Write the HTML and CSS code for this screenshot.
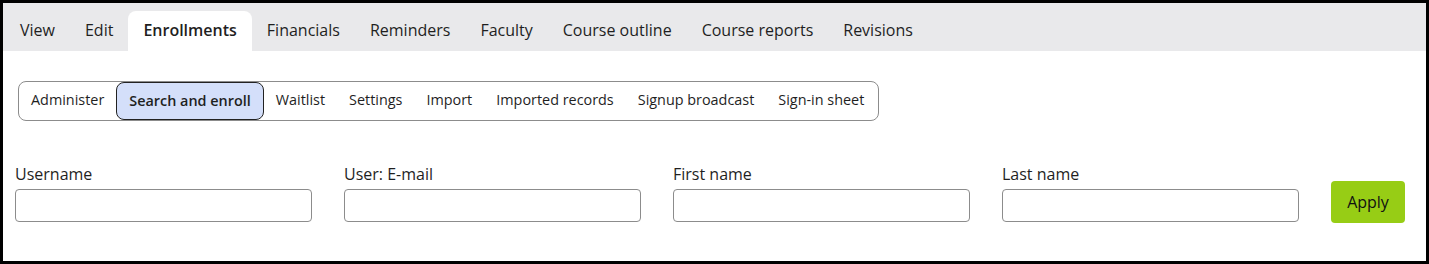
FILE: index.html
```html
<!DOCTYPE html>
<html lang="en">
<head>
  <meta charset="UTF-8" />
  <title>Enrollments - Search and enroll</title>
  <link rel="stylesheet" href="styles.css">
</head>
<body>
  <div class="frame">

    <!-- Main tabs -->
    <div class="tab-bar">
      <a class="tab">View</a>
      <a class="tab">Edit</a>
      <a class="tab active">Enrollments</a>
      <a class="tab">Financials</a>
      <a class="tab">Reminders</a>
      <a class="tab">Faculty</a>
      <a class="tab">Course outline</a>
      <a class="tab">Course reports</a>
      <a class="tab">Revisions</a>
    </div>

    <div class="content">
      <!-- Sub navigation -->
      <div class="sub-nav">
        <a class="sub-item">Administer</a>
        <a class="sub-item active">Search and enroll</a>
        <a class="sub-item">Waitlist</a>
        <a class="sub-item">Settings</a>
        <a class="sub-item">Import</a>
        <a class="sub-item">Imported records</a>
        <a class="sub-item">Signup broadcast</a>
        <a class="sub-item">Sign-in sheet</a>
      </div>

      <!-- Filters -->
      <form class="filter-row">
        <div class="field">
          <label for="username">Username</label>
          <input type="text" id="username" />
        </div>
        <div class="field">
          <label for="email">User: E-mail</label>
          <input type="text" id="email" />
        </div>
        <div class="field">
          <label for="firstName">First name</label>
          <input type="text" id="firstName" />
        </div>
        <div class="field">
          <label for="lastName">Last name</label>
          <input type="text" id="lastName" />
        </div>
        <button type="button" class="apply-btn">Apply</button>
      </form>
    </div>

  </div>
</body>
</html>
```

FILE: styles.css
```css
:root {
  --text-color: #1f1f1f;
  --tab-bg: #e9e9eb;
  --border-grey: #8c8c8c;
  --active-bg: #d4dffa;
  --apply-green: #97cd15;
}

* {
  box-sizing: border-box;
  margin: 0;
  padding: 0;
}

body {
  font-family: 'Open Sans', 'Noto Sans', sans-serif;
  color: var(--text-color);
  background: #fff;
}

.frame {
  height: 264px;
  border: 3px solid #000;
  display: flex;
  flex-direction: column;
}

.tab-bar {
  display: flex;
  align-items: flex-end;
  height: 48px;
  padding: 0 2px;
  background: var(--tab-bg);
}

.tab {
  display: block;
  height: 40px;
  line-height: 39px;
  padding: 0 15px;
  font-size: 16px;
  cursor: pointer;
}

.tab.active {
  background: #fff;
  font-weight: 600;
  border-radius: 8px 8px 0 0;
}

.content {
  padding: 30px 12px 0;
}

.sub-nav {
  display: inline-flex;
  align-items: center;
  height: 40px;
  margin-left: 3px;
  border: 1px solid var(--border-grey);
  border-radius: 8px;
}

.sub-item {
  display: block;
  height: 38px;
  line-height: 36px;
  padding: 0 12px;
  font-size: 14.4px;
  cursor: pointer;
}

.sub-item:last-child {
  padding-right: 14px;
}

.sub-item.active {
  background: var(--active-bg);
  border: 1px solid #222;
  border-radius: 8px;
  font-weight: 600;
}

.filter-row {
  display: flex;
  align-items: flex-end;
  gap: 32px;
  margin-top: 42px;
}

.field {
  display: flex;
  flex-direction: column;
  width: 297px;
}

.field label {
  font-size: 16px;
  line-height: 22px;
  margin-bottom: 4px;
}

.field input {
  height: 33px;
  border: 1px solid var(--border-grey);
  border-radius: 4px;
  padding: 0 8px;
  font-size: 15px;
  font-family: inherit;
}

.apply-btn {
  width: 74px;
  height: 42px;
  margin-bottom: -1px;
  background: var(--apply-green);
  border: none;
  border-radius: 4px;
  font-family: inherit;
  font-size: 16px;
  color: #111;
  cursor: pointer;
}
```
